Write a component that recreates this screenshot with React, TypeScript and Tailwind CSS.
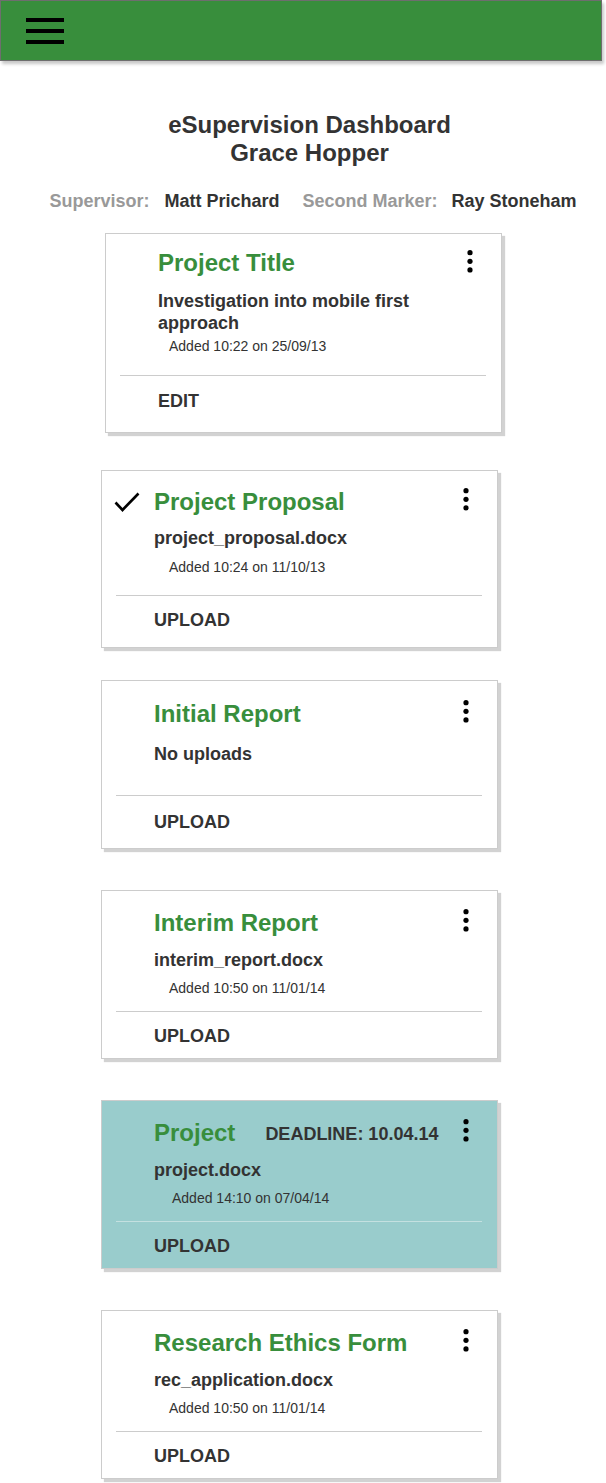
import React from "react";

type Task = {
  title: string;
  lines?: string[];
  added?: string;
  action: string;
  done?: boolean;
  deadline?: string;
  highlight?: boolean;
  wrap: string;
  pad: string;
  linesMt: string;
  addedCls: string;
  dividerMt: string;
  actionMt: string;
  pb: string;
  dotsMt: string;
};

const tasks: Task[] = [
  {
    title: "Project Title",
    lines: ["Investigation into mobile first", "approach"],
    added: "Added 10:22 on 25/09/13",
    action: "EDIT",
    wrap: "mt-[21px] ml-[105px]",
    pad: "pt-[15px]",
    linesMt: "mt-[13px]",
    addedCls: "mt-[3px] ml-[11px]",
    dividerMt: "mt-[20px]",
    actionMt: "mt-[14px]",
    pb: "pb-[20px]",
    dotsMt: "mt-[1px]",
  },
  {
    title: "Project Proposal",
    lines: ["project_proposal.docx"],
    added: "Added 10:24 on 11/10/13",
    action: "UPLOAD",
    done: true,
    wrap: "mt-[37px] ml-[101px]",
    pad: "pt-[17px]",
    linesMt: "mt-[11px]",
    addedCls: "mt-[9px] ml-[15px]",
    dividerMt: "mt-[19px]",
    actionMt: "mt-[13px]",
    pb: "pb-[16px]",
    dotsMt: "mt-0",
  },
  {
    title: "Initial Report",
    lines: ["No uploads"],
    action: "UPLOAD",
    wrap: "mt-[32px] ml-[101px]",
    pad: "pt-[19px]",
    linesMt: "mt-[15px]",
    addedCls: "",
    dividerMt: "mt-[30px]",
    actionMt: "mt-[15px]",
    pb: "pb-[15px]",
    dotsMt: "mt-0",
  },
  {
    title: "Interim Report",
    lines: ["interim_report.docx"],
    added: "Added 10:50 on 11/01/14",
    action: "UPLOAD",
    wrap: "mt-[41px] ml-[101px]",
    pad: "pt-[18px]",
    linesMt: "mt-[12px]",
    addedCls: "mt-[8px] ml-[15px]",
    dividerMt: "mt-[14px]",
    actionMt: "mt-[13px]",
    pb: "pb-[11px]",
    dotsMt: "mt-0",
  },
  {
    title: "Project",
    deadline: "DEADLINE: 10.04.14",
    lines: ["project.docx"],
    added: "Added 14:10 on 07/04/14",
    action: "UPLOAD",
    highlight: true,
    wrap: "mt-[41px] ml-[101px]",
    pad: "pt-[18px]",
    linesMt: "mt-[12px]",
    addedCls: "mt-[8px] ml-[18px]",
    dividerMt: "mt-[14px]",
    actionMt: "mt-[13px]",
    pb: "pb-[11px]",
    dotsMt: "mt-0",
  },
  {
    title: "Research Ethics Form",
    lines: ["rec_application.docx"],
    added: "Added 10:50 on 11/01/14",
    action: "UPLOAD",
    wrap: "mt-[41px] ml-[101px]",
    pad: "pt-[18px]",
    linesMt: "mt-[12px]",
    addedCls: "mt-[8px] ml-[15px]",
    dividerMt: "mt-[14px]",
    actionMt: "mt-[13px]",
    pb: "pb-[11px]",
    dotsMt: "mt-0",
  },
];

function Dots() {
  return (
    <svg width="6" height="23" viewBox="0 0 6 23" className="block">
      <circle cx="3" cy="2.7" r="2.6" fill="#000" />
      <circle cx="3" cy="11.3" r="2.6" fill="#000" />
      <circle cx="3" cy="19.9" r="2.6" fill="#000" />
    </svg>
  );
}

function Check() {
  return (
    <svg width="26" height="21" viewBox="0 0 26 21" className="block">
      <path d="M1.5 10.5 L8.5 18 L24.5 1.5" fill="none" stroke="#000" strokeWidth="2.6" />
    </svg>
  );
}

function TaskCard({ task }: { task: Task }) {
  return (
    <div
      className={`${task.wrap} w-[397px] border border-[#cccccc] shadow-[3px_3px_1px_#d2d2d2] ${
        task.highlight ? "bg-[#99cccc]" : "bg-white"
      } ${task.pad} ${task.pb}`}
    >
      <div className="flex items-start">
        <div className="w-[52px] h-[28px] flex items-center">
          {task.done && (
            <div className="ml-[12px] mt-[1px]">
              <Check />
            </div>
          )}
        </div>
        <h2 className="text-[24px] leading-[28px] font-bold text-[#388e3c]">{task.title}</h2>
        {task.deadline && (
          <span className="ml-[30px] mt-[4px] text-[18px] leading-[22px] font-bold text-[#333333]">
            {task.deadline}
          </span>
        )}
        <div className="flex-1" />
        <div className={`mr-[28px] ${task.dotsMt}`}>
          <Dots />
        </div>
      </div>

      <div className={`pl-[52px] ${task.linesMt}`}>
        {task.lines?.map((l) => (
          <p key={l} className="text-[18px] leading-[22px] font-bold text-[#333333]">
            {l}
          </p>
        ))}
        {task.added && (
          <p className={`text-[14px] leading-[18px] text-[#333333] ${task.addedCls}`}>{task.added}</p>
        )}
      </div>

      <div
        className={`${task.dividerMt} ml-[14px] mr-[15px] h-px ${
          task.highlight ? "bg-[#c4e0e0]" : "bg-[#cccccc]"
        }`}
      />

      <button
        className={`${task.actionMt} pl-[52px] block text-[18px] leading-[22px] font-bold text-[#333333]`}
      >
        {task.action}
      </button>
    </div>
  );
}

export default function App() {
  return (
    <div
      className="w-[606px] min-h-[1483px] bg-white overflow-hidden"
      style={{ fontFamily: '"Liberation Sans", Arial, sans-serif' }}
    >
      <header className="w-[602px] h-[61px] bg-[#388e3c] border border-[#6e6e6e] shadow-[2px_3px_3px_rgba(0,0,0,0.22)] pt-[17px] pl-[25px]">
        <button className="flex flex-col gap-[7px]">
          <span className="block w-[38px] h-[4px] bg-black" />
          <span className="block w-[38px] h-[4px] bg-black" />
          <span className="block w-[38px] h-[4px] bg-black" />
        </button>
      </header>

      <div className="mt-[50px] pl-[13px] text-center text-[24px] leading-[28px] font-bold text-[#333333]">
        <h1>eSupervision Dashboard</h1>
        <h1>Grace Hopper</h1>
      </div>

      <div className="mt-[23px] pl-[20px] flex justify-center text-[18px] leading-[22px] font-bold">
        <span className="text-[#999999]">Supervisor:</span>
        <span className="ml-[15px] text-[#333333]">Matt Prichard</span>
        <span className="ml-[23px] text-[#999999]">Second Marker:</span>
        <span className="ml-[14px] text-[#333333]">Ray Stoneham</span>
      </div>

      <div className="flex flex-col items-start">
        {tasks.map((t) => (
          <TaskCard key={t.title} task={t} />
        ))}
      </div>
    </div>
  );
}
